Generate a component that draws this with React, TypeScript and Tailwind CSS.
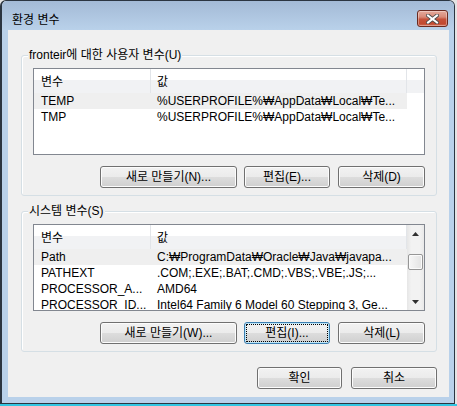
import clsx from 'clsx';

type EnvVar = { name: string; value: string; hot?: boolean };

const userVars: EnvVar[] = [
  { name: 'TEMP', value: '%USERPROFILE%₩AppData₩Local₩Te...', hot: true },
  { name: 'TMP', value: '%USERPROFILE%₩AppData₩Local₩Te...' },
];

const systemVars: EnvVar[] = [
  { name: 'Path', value: 'C:₩ProgramData₩Oracle₩Java₩javapa...', hot: true },
  { name: 'PATHEXT', value: '.COM;.EXE;.BAT;.CMD;.VBS;.VBE;.JS;...' },
  { name: 'PROCESSOR_A...', value: 'AMD64' },
  { name: 'PROCESSOR_ID...', value: 'Intel64 Family 6 Model 60 Stepping 3, Ge...' },
];

function WinButton({ label, className, focused }: { label: string; className: string; focused?: boolean }) {
  return (
    <button
      className={clsx(
        'h-[22px] rounded-[3px] border bg-[linear-gradient(#f2f2f2_0%,#ebebeb_50%,#dddddd_50%,#cfcfcf_100%)] text-center leading-[20px]',
        focused
          ? 'border-[#3c7fb1] shadow-[inset_0_0_0_1px_#bfe6f8] outline-1 -outline-offset-3 outline-black outline-dotted'
          : 'border-[#707070] shadow-[inset_0_0_0_1px_#fcfcfc]',
        className
      )}
    >
      {label}
    </button>
  );
}

function Arrow({ down }: { down?: boolean }) {
  return (
    <div className="flex h-[17px] items-center justify-center">
      <svg width="7" height="4" viewBox="0 0 7 4">
        <path d={down ? 'M0 0H7L3.5 4Z' : 'M3.5 0L7 4H0Z'} fill="#303030" />
      </svg>
    </div>
  );
}

function ScrollBar() {
  return (
    <div className="flex w-[17px] shrink-0 flex-col bg-[linear-gradient(90deg,#e6e6e6,#f2f2f2_25%,#f2f2f2_75%,#e9e9e9)]">
      <Arrow />
      <div className="ml-[1px] mt-[12px] h-[16px] w-[15px] rounded-[2px] border border-[#969696] bg-[linear-gradient(90deg,#f7f7f7,#e3e3e3)] shadow-[inset_0_0_0_1px_#fbfbfb]" />
      <div className="flex-1" />
      <Arrow down />
    </div>
  );
}

function VarList({ rows, scroll }: { rows: EnvVar[]; scroll?: boolean }) {
  return (
    <div className="flex h-[87px] w-[392px] border border-[#828790] bg-white">
      <div className="flex min-w-0 flex-1 flex-col overflow-hidden">
        <div className="flex h-[24px] shrink-0 bg-[linear-gradient(#ffffff_0%,#ffffff_46%,#f1f2f4_46%,#f1f2f4_100%)] leading-[26px]">
          <div className="w-[117px] shrink-0 border-r border-[#e2e5e9] pl-[7px]">변수</div>
          <div className="w-[256px] shrink-0 border-r border-[#e2e5e9] pl-[6px]">값</div>
          {!scroll && <div className="flex-1" />}
        </div>
        {rows.map((row) => (
          <div
            key={row.name}
            className={clsx('flex h-[16px] w-[373px] shrink-0 leading-[16px]', row.hot && 'bg-[#efefef]')}
          >
            <div className="w-[117px] shrink-0 overflow-hidden whitespace-nowrap pl-[7px]">{row.name}</div>
            <div className="flex-1 overflow-hidden whitespace-nowrap pl-[6px]">{row.value}</div>
          </div>
        ))}
      </div>
      {scroll && <ScrollBar />}
    </div>
  );
}

function GroupBox({ caption, children }: { caption: string; children: React.ReactNode }) {
  return (
    <div className="relative h-[141px] w-[416px] rounded-[3px] border border-[#d5dfe5] shadow-[inset_1px_1px_0_#ffffff]">
      <span className="absolute -top-[9px] left-[6px] bg-[#f0f0f0] px-[1px] leading-[16px]">{caption}</span>
      <div className="flex flex-col px-[11px] pt-[12px]">{children}</div>
    </div>
  );
}

function CloseButton() {
  return (
    <div className="flex h-[17px] w-[31px] items-center justify-center rounded-[3px] border border-[#6a2a20] bg-[linear-gradient(#e4aa9c_0%,#d98a78_40%,#c5513a_55%,#c24a31_85%,#d2705a_100%)] shadow-[inset_0_0_0_1px_rgba(255,255,255,0.35)]">
      <svg width="13" height="10" viewBox="0 0 13 10">
        <path d="M2 1.5L11 8.5M11 1.5L2 8.5" stroke="#4a4a4a" strokeWidth="3.8" strokeLinecap="square" />
        <path d="M2 1.5L11 8.5M11 1.5L2 8.5" stroke="#ffffff" strokeWidth="2" strokeLinecap="square" />
      </svg>
    </div>
  );
}

export default function App() {
  return (
    <div className="flex h-[406px] w-[457px] flex-col bg-[#e4e4e4] font-['Liberation_Sans','Noto_Sans_CJK_KR',sans-serif] text-[12px] leading-none text-black">
      <div className="flex h-[404px] w-[455px] flex-col rounded-t-[6px] border border-l-2 border-[#2b3541] bg-[#b9d1ea] shadow-[inset_0_1px_0_rgba(255,255,255,0.6)]">
        {/* title bar */}
        <div className="flex h-[29px] shrink-0 items-start rounded-t-[5px] bg-[linear-gradient(#a3bad6,#b9d1ea)] pl-[10px] pr-[6px]">
          <span className="mt-[11px] leading-[16px]">환경 변수</span>
          <div className="ml-auto mt-[9px]">
            <CloseButton />
          </div>
        </div>

        {/* client area */}
        <div className="ml-[6px] mr-[5px] flex h-[367px] flex-col bg-[#f0f0f0] pl-[13px] pr-[12px] pt-[25px]">
          <GroupBox caption="fronteir에 대한 사용자 변수(U)">
            <VarList rows={userVars} />
            <div className="mt-[11px] flex justify-end">
              <WinButton label="새로 만들기(N)..." className="w-[137px]" />
              <WinButton label="편집(E)..." className="ml-[7px] w-[86px]" />
              <WinButton label="삭제(D)" className="ml-[8px] w-[87px]" />
            </div>
          </GroupBox>

          <div className="mt-[15px]">
            <GroupBox caption="시스템 변수(S)">
              <VarList rows={systemVars} scroll />
              <div className="mt-[11px] flex justify-end">
                <WinButton label="새로 만들기(W)..." className="w-[137px]" />
                <WinButton label="편집(I)..." className="ml-[7px] w-[86px]" focused />
                <WinButton label="삭제(L)" className="ml-[8px] w-[87px]" />
              </div>
            </GroupBox>
          </div>

          <div className="mt-[15px] flex justify-end">
            <WinButton label="확인" className="w-[85px]" />
            <WinButton label="취소" className="ml-[9px] w-[86px]" />
          </div>
        </div>
      </div>
      <div className="h-[2px] w-[457px] bg-[#33c6e2]" />
    </div>
  );
}
